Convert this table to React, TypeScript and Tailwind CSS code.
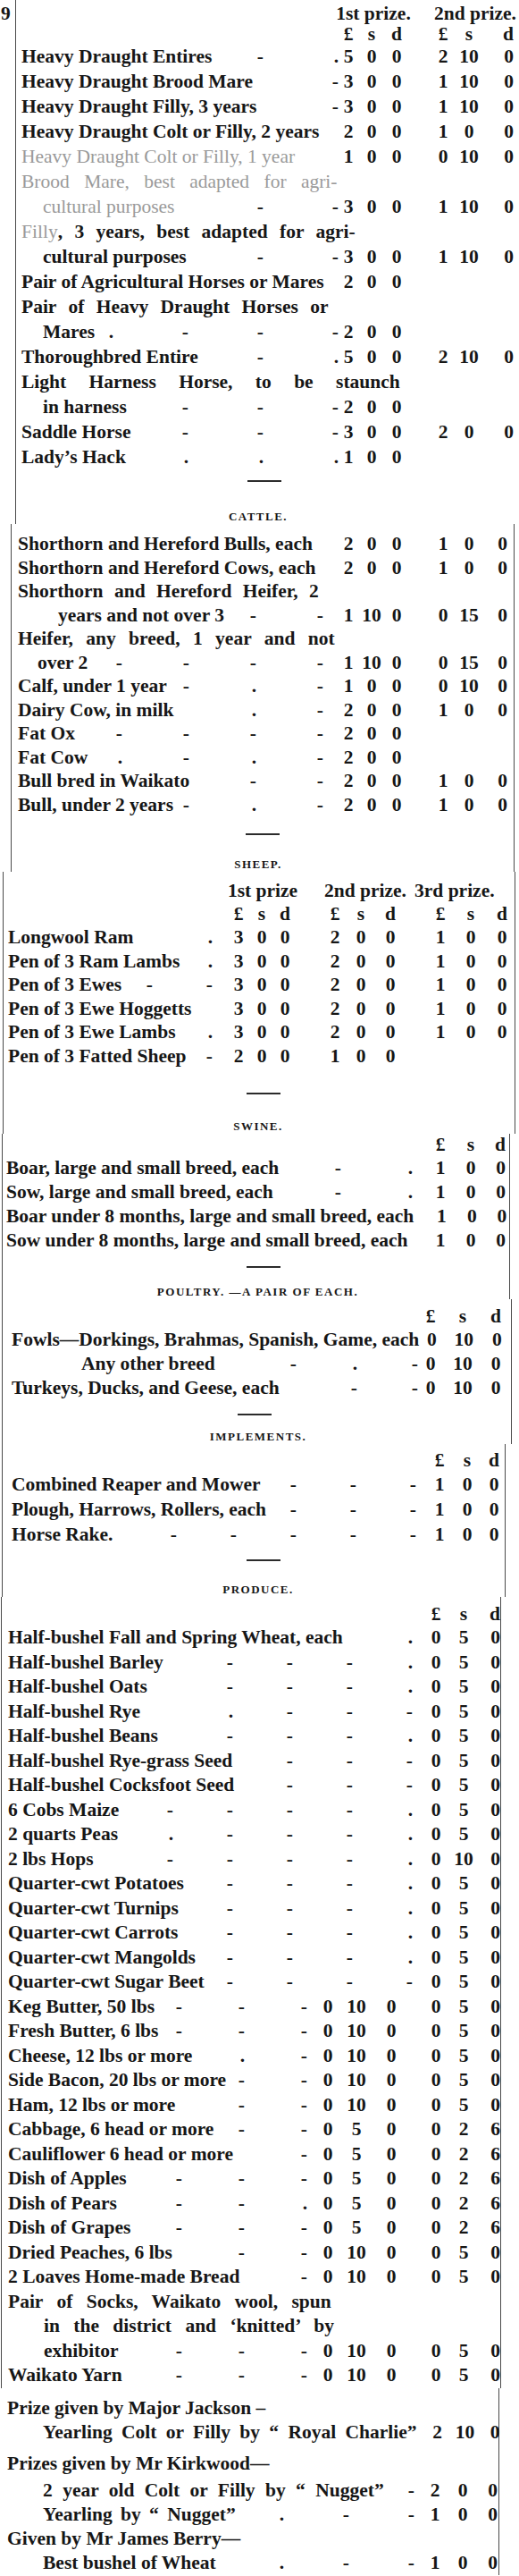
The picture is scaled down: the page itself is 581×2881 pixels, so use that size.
import { Fragment, type ReactNode } from "react";
import clsx from "clsx";

type Layout = {
  row: string;
  groups: string[][];
  spacers: string[];
  dashArea: string;
  slot: string;
};

type Row = {
  label?: ReactNode;
  indent?: string;
  dots?: string;
  v?: string;
  faded?: boolean;
  lay?: Layout;
};

const HORSE: Layout = {
  row: "h-[28px] leading-[28px]",
  groups: [
    ["w-[22px] text-center", "w-[30px] text-center", "w-[26px] text-center"],
    ["w-[26px] text-center", "w-[32px] text-center", "w-[40px] pr-[6px] text-right"],
  ],
  spacers: ["w-[26px]"],
  dashArea: "",
  slot: "w-[84px]",
};

const CATTLE: Layout = {
  row: "h-[26.5px] leading-[26.5px]",
  groups: [
    ["w-[22px] text-center", "w-[30px] text-center", "w-[26px] text-center"],
    ["w-[26px] text-center", "w-[32px] text-center", "w-[34px] pr-[7px] text-right"],
  ],
  spacers: ["w-[26px]"],
  dashArea: "pr-[17px]",
  slot: "w-[75px]",
};

const SHEEP: Layout = {
  row: "h-[26.5px] leading-[26.5px]",
  groups: [
    ["w-[26px] text-center", "w-[26px] text-center", "w-[26px] text-center"],
    ["w-[26px] text-center", "w-[32px] text-center", "w-[34px] text-center"],
    ["w-[26px] text-center", "w-[42px] text-center", "w-[28px] text-center"],
  ],
  spacers: ["w-[30px]", "w-[26px]"],
  dashArea: "pr-[16px]",
  slot: "w-[67px]",
};

const SWINE: Layout = {
  row: "h-[27px] leading-[27px]",
  groups: [["w-[26px] text-center", "w-[42px] text-center", "w-[22px] pr-[4px] text-right"]],
  spacers: [],
  dashArea: "pr-[18px]",
  slot: "w-[80px]",
};

const POULTRY: Layout = {
  row: "h-[27px] leading-[27px]",
  groups: [["w-[26px] text-center", "w-[46px] text-center", "w-[28px] text-center"]],
  spacers: [],
  dashArea: "pr-[1px]",
  slot: "w-[68px]",
};

const TOOLS: Layout = {
  row: "h-[28px] leading-[28px]",
  groups: [["w-[26px] text-center", "w-[36px] text-center", "w-[24px] text-center"]],
  spacers: [],
  dashArea: "pr-[13px]",
  slot: "w-[67px]",
};

const PRODUCE: Layout = {
  row: "h-[27.5px] leading-[27.5px]",
  groups: [["w-[26px] text-center", "w-[36px] text-center", "w-[23px] text-right"]],
  spacers: [],
  dashArea: "pr-[13px]",
  slot: "w-[67px]",
};

const PRODUCE2: Layout = {
  row: "h-[27.5px] leading-[27.5px]",
  groups: [
    ["w-[26px] text-center", "w-[38px] text-center", "w-[40px] text-center"],
    ["w-[26px] text-center", "w-[36px] text-center", "w-[23px] text-right"],
  ],
  spacers: ["w-[17px]"],
  dashArea: "pr-[10px]",
  slot: "w-[70px]",
};

const BOTTOM: Layout = {
  row: "h-[27px] leading-[27px]",
  groups: [["w-[26px] text-center", "w-[36px] text-center", "w-[22px] pr-[1px] text-right"]],
  spacers: [],
  dashArea: "pr-[10px]",
  slot: "w-[73px]",
};

const horses: Row[] = [
  { label: "Heavy Draught Entires", dots: "- .", v: "5 0 0 2 10 0" },
  { label: "Heavy Draught Brood Mare", dots: "-", v: "3 0 0 1 10 0" },
  { label: "Heavy Draught Filly, 3 years", dots: "-", v: "3 0 0 1 10 0" },
  { label: "Heavy Draught Colt or Filly, 2 years", v: "2 0 0 1 0 0" },
  { label: "Heavy Draught Colt or Filly, 1 year", faded: true, v: "1 0 0 0 10 0" },
  { label: "Brood Mare, best adapted for agri-", faded: true, indent: "[word-spacing:11px]" },
  { label: "cultural purposes", faded: true, indent: "pl-[24px]", dots: "- -", v: "3 0 0 1 10 0" },
  {
    label: (
      <>
        <span className="font-normal text-[#9a9a9a]">Filly</span>, 3 years, best adapted for agri-
      </>
    ),
    indent: "[word-spacing:8px]",
  },
  { label: "cultural purposes", indent: "pl-[24px]", dots: "- -", v: "3 0 0 1 10 0" },
  { label: "Pair of Agricultural Horses or Mares", v: "2 0 0" },
  { label: "Pair of Heavy Draught Horses or", indent: "[word-spacing:8px]" },
  { label: "Mares", indent: "pl-[24px]", dots: ". - - -", v: "2 0 0" },
  { label: "Thoroughbred Entire", dots: "- .", v: "5 0 0 2 10 0" },
  { label: "Light Harness Horse, to be staunch", indent: "[word-spacing:20px]" },
  { label: "in harness", indent: "pl-[24px]", dots: "- - -", v: "2 0 0" },
  { label: "Saddle Horse", dots: "- - -", v: "3 0 0 2 0 0" },
  { label: "Lady’s Hack", dots: ". . .", v: "1 0 0" },
];

const cattle: Row[] = [
  { label: "Shorthorn and Hereford Bulls, each", v: "2 0 0 1 0 0" },
  { label: "Shorthorn and Hereford Cows, each", v: "2 0 0 1 0 0" },
  { label: "Shorthorn and Hereford Heifer, 2", indent: "[word-spacing:7px]" },
  { label: "years and not over 3", indent: "pl-[45px]", dots: "- -", v: "1 10 0 0 15 0" },
  { label: "Heifer, any breed, 1 year and not", indent: "[word-spacing:9px]" },
  { label: "over 2", indent: "pl-[22px]", dots: "- - - -", v: "1 10 0 0 15 0" },
  { label: "Calf, under 1 year", dots: "- . -", v: "1 0 0 0 10 0" },
  { label: "Dairy Cow, in milk", dots: ". -", v: "2 0 0 1 0 0" },
  { label: "Fat Ox", dots: "- - - -", v: "2 0 0" },
  { label: "Fat Cow", dots: ". - . -", v: "2 0 0" },
  { label: "Bull bred in Waikato", dots: "- -", v: "2 0 0 1 0 0" },
  { label: "Bull, under 2 years", dots: "- . -", v: "2 0 0 1 0 0" },
];

const SHEEP_PRIZES = "3 0 0 2 0 0 1 0 0";
const sheep: Row[] = [
  { label: "Longwool Ram", dots: ".", v: SHEEP_PRIZES },
  { label: "Pen of 3 Ram Lambs", dots: ".", v: SHEEP_PRIZES },
  { label: "Pen of 3 Ewes", dots: "- -", v: SHEEP_PRIZES },
  { label: "Pen of 3 Ewe Hoggetts", v: SHEEP_PRIZES },
  { label: "Pen of 3 Ewe Lambs", dots: ".", v: SHEEP_PRIZES },
  { label: "Pen of 3 Fatted Sheep", dots: "-", v: "2 0 0 1 0 0" },
];

const swine: Row[] = [
  { label: "Boar, large and small breed, each", dots: "- .", v: "1 0 0" },
  { label: "Sow, large and small breed, each", dots: "- .", v: "1 0 0" },
  { label: "Boar under 8 months, large and small breed, each", v: "1 0 0" },
  { label: "Sow under 8 months, large and small breed, each", v: "1 0 0" },
];

const poultry: Row[] = [
  { label: "Fowls—Dorkings, Brahmas, Spanish, Game, each", v: "0 10 0" },
  { label: "Any other breed", indent: "pl-[78px]", dots: "- . -", v: "0 10 0" },
  { label: "Turkeys, Ducks, and Geese, each", dots: "- -", v: "0 10 0" },
];

const tools: Row[] = [
  { label: "Combined Reaper and Mower", dots: "- - -", v: "1 0 0" },
  { label: "Plough, Harrows, Rollers, each", dots: "- - -", v: "1 0 0" },
  { label: "Horse Rake.", dots: "- - - - -", v: "1 0 0" },
];

const produce: Row[] = [
  { label: "Half-bushel Fall and Spring Wheat, each", dots: ".", v: "0 5 0" },
  { label: "Half-bushel Barley", dots: "- - - .", v: "0 5 0" },
  { label: "Half-bushel Oats", dots: "- - - .", v: "0 5 0" },
  { label: "Half-bushel Rye", dots: ". - - -", v: "0 5 0" },
  { label: "Half-bushel Beans", dots: "- - - .", v: "0 5 0" },
  { label: "Half-bushel Rye-grass Seed", dots: "- - -", v: "0 5 0" },
  { label: "Half-bushel Cocksfoot Seed", dots: "- - -", v: "0 5 0" },
  { label: "6 Cobs Maize", dots: "- - - - .", v: "0 5 0" },
  { label: "2 quarts Peas", dots: ". - - - .", v: "0 5 0" },
  { label: "2 lbs Hops", dots: "- - - - .", v: "0 10 0" },
  { label: "Quarter-cwt Potatoes", dots: "- - - .", v: "0 5 0" },
  { label: "Quarter-cwt Turnips", dots: "- - - .", v: "0 5 0" },
  { label: "Quarter-cwt Carrots", dots: "- - - .", v: "0 5 0" },
  { label: "Quarter-cwt Mangolds", dots: "- - - .", v: "0 5 0" },
  { label: "Quarter-cwt Sugar Beet", dots: "- - - -", v: "0 5 0" },
  { label: "Keg Butter, 50 lbs", dots: "- - -", v: "0 10 0 0 5 0", lay: PRODUCE2 },
  { label: "Fresh Butter, 6 lbs", dots: "- - -", v: "0 10 0 0 5 0", lay: PRODUCE2 },
  { label: "Cheese, 12 lbs or more", dots: ". -", v: "0 10 0 0 5 0", lay: PRODUCE2 },
  { label: "Side Bacon, 20 lbs or more", dots: "- -", v: "0 10 0 0 5 0", lay: PRODUCE2 },
  { label: "Ham, 12 lbs or more", dots: "- -", v: "0 10 0 0 5 0", lay: PRODUCE2 },
  { label: "Cabbage, 6 head or more", dots: "- -", v: "0 5 0 0 2 6", lay: PRODUCE2 },
  { label: "Cauliflower 6 head or more", dots: "-", v: "0 5 0 0 2 6", lay: PRODUCE2 },
  { label: "Dish of Apples", dots: "- - -", v: "0 5 0 0 2 6", lay: PRODUCE2 },
  { label: "Dish of Pears", dots: "- - .", v: "0 5 0 0 2 6", lay: PRODUCE2 },
  { label: "Dish of Grapes", dots: "- - -", v: "0 5 0 0 2 6", lay: PRODUCE2 },
  { label: "Dried Peaches, 6 lbs", dots: "- -", v: "0 10 0 0 5 0", lay: PRODUCE2 },
  { label: "2 Loaves Home-made Bread", dots: "-", v: "0 10 0 0 5 0", lay: PRODUCE2 },
  { label: "Pair of Socks, Waikato wool, spun", indent: "[word-spacing:10px]" },
  { label: "in the district and ‘knitted’ by", indent: "pl-[40px] [word-spacing:10px]" },
  { label: "exhibitor", indent: "pl-[40px]", dots: "- - -", v: "0 10 0 0 5 0", lay: PRODUCE2 },
  { label: "Waikato Yarn", dots: "- - -", v: "0 10 0 0 5 0", lay: PRODUCE2 },
];

function Line({ r, lay }: { r: Row; lay: Layout }) {
  const L = r.lay ?? lay;

  // a label that runs on to the next line: no leaders and no money columns
  if (!r.v && !r.dots) {
    return (
      <div className={clsx("whitespace-nowrap", L.row, r.indent, r.faded && "font-normal text-[#9a9a9a]")}>
        {r.label}
      </div>
    );
  }

  const vals = r.v ? r.v.split(" ") : [];
  const dots = r.dots ? r.dots.split(" ") : [];
  return (
    <div className={clsx("flex whitespace-nowrap", L.row)}>
      <span className={clsx("shrink-0", r.indent, r.faded && "font-normal text-[#9a9a9a]")}>
        {r.label}
      </span>
      <span className={clsx("flex min-w-0 flex-1 justify-end overflow-hidden", L.dashArea)}>
        {dots.map((d, i) => (
          <span key={i} className={clsx("shrink-0 text-right", L.slot)}>
            {d}
          </span>
        ))}
      </span>
      {L.groups.map((g, gi) => (
        <Fragment key={gi}>
          {gi > 0 && <span className={clsx("shrink-0", L.spacers[gi - 1])} />}
          {g.map((c, ci) => (
            <span key={ci} className={clsx("shrink-0", c)}>
              {vals[gi * 3 + ci] ?? ""}
            </span>
          ))}
        </Fragment>
      ))}
    </div>
  );
}

function Break({ title, rule, head }: { title: string; rule: string; head: string }) {
  return (
    <>
      <div className={clsx("h-[2px] w-[38px] bg-[#2b2b2b]", rule)} />
      <div className={clsx("text-center text-[13px] leading-[16px] tracking-[1.5px]", head)}>
        {title}
      </div>
    </>
  );
}

const LSD = (lay: Layout, row: string, v: string): Row => ({ v, lay: { ...lay, row } });

export default function App() {
  return (
    <div className="w-[581px] overflow-hidden bg-white font-['Liberation_Serif','Times_New_Roman',serif] text-[21.5px] font-bold text-[#161616]">
      {/* HORSES */}
      <div className="flex">
        <div className="w-[17px] shrink-0 pl-[1px] pt-[3px] leading-[24px]">9</div>
        <div className="w-[564px] border-l border-[#4a4a4a] pl-[6px] pt-[3px]">
          <div className="flex h-[24px] whitespace-nowrap leading-[24px]">
            <span className="flex-1" />
            <span className="w-[86px] text-center">1st prize.</span>
            <span className="w-[22px]" />
            <span className="w-[98px] text-center">2nd prize.</span>
          </div>
          <Line r={LSD(HORSE, "h-[22px] leading-[22px]", "£ s d £ s d")} lay={HORSE} />
          {horses.map((r, i) => (
            <Line key={i} r={r} lay={HORSE} />
          ))}
          <Break title="CATTLE." rule="mt-[12px] ml-[253px]" head="mt-[31px] pr-[27px]" />
        </div>
      </div>

      {/* CATTLE */}
      <div className="ml-[12px] w-[564px] border-x border-[#4a4a4a] pl-[7px] pt-[9px]">
        {cattle.map((r, i) => (
          <Line key={i} r={r} lay={CATTLE} />
        ))}
        <Break title="SHEEP." rule="mt-[19px] ml-[255px]" head="mt-[25px] pr-[17px]" />
      </div>

      {/* SHEEP */}
      <div className="ml-[3px] w-[574px] border-x border-[#4a4a4a] pl-[5px] pt-[8px]">
        <div className="flex h-[26px] whitespace-nowrap leading-[26px]">
          <span className="flex-1" />
          <span className="w-[80px] text-center">1st prize</span>
          <span className="w-[28px]" />
          <span className="w-[94px] text-center">2nd prize.</span>
          <span className="w-[8px]" />
          <span className="w-[112px] text-left">3rd prize.</span>
        </div>
        <Line r={LSD(SHEEP, "h-[26px] leading-[26px]", "£ s d £ s d £ s d")} lay={SHEEP} />
        {sheep.map((r, i) => (
          <Line key={i} r={r} lay={SHEEP} />
        ))}
        <Break title="SWINE." rule="mt-[28px] ml-[267px]" head="mt-[28px] pr-[7px]" />
      </div>

      {/* SWINE */}
      <div className="ml-[2px] w-[569px] border-x border-[#4a4a4a] pl-[4px]">
        <Line r={LSD(SWINE, "h-[25px] leading-[25px]", "£ s d")} lay={SWINE} />
        {swine.map((r, i) => (
          <Line key={i} r={r} lay={SWINE} />
        ))}
        <Break title="POULTRY. —A PAIR OF EACH." rule="mt-[15px] ml-[269px]" head="mt-[19px]" />
      </div>

      {/* POULTRY */}
      <div className="ml-[2px] w-[571px] border-x border-[#4a4a4a] pl-[10px] pr-[3px] pt-[7px]">
        <Line r={LSD(POULTRY, "h-[25px] leading-[25px]", "£ s d")} lay={POULTRY} />
        {poultry.map((r, i) => (
          <Line key={i} r={r} lay={POULTRY} />
        ))}
        <Break title="IMPLEMENTS." rule="mt-[15px] ml-[253px]" head="mt-[16px] pr-[4px]" />
      </div>

      {/* IMPLEMENTS */}
      <div className="ml-[2px] w-[564px] border-x border-[#4a4a4a] pl-[10px] pt-[6px]">
        <Line r={LSD(TOOLS, "h-[25px] leading-[25px]", "£ s d")} lay={TOOLS} />
        {tools.map((r, i) => (
          <Line key={i} r={r} lay={TOOLS} />
        ))}
        <Break title="PRODUCE." rule="mt-[14px] ml-[263px]" head="mt-[24px]" />
      </div>

      {/* PRODUCE */}
      <div className="ml-[1px] w-[560px] border-x border-[#4a4a4a] pl-[7px] pt-[7px]">
        <Line r={LSD(PRODUCE, "h-[25px] leading-[25px]", "£ s d")} lay={PRODUCE} />
        {produce.map((r, i) => (
          <Line key={i} r={r} lay={PRODUCE} />
        ))}
      </div>

      {/* SPECIAL PRIZES */}
      <div className="w-[559px] border-r border-[#4a4a4a] pl-[8px] pt-[9px]">
        <Line r={{ label: "Prize given by Major Jackson –" }} lay={BOTTOM} />
        <Line
          r={{ label: "Yearling Colt or Filly by “ Royal Charlie”", indent: "pl-[40px] [word-spacing:5px]", v: "2 10 0" }}
          lay={BOTTOM}
        />
        <div className="mt-[8px]">
          <Line r={{ label: "Prizes given by Mr Kirkwood—" }} lay={BOTTOM} />
        </div>
        <div className="mt-[3px]">
          <Line
            r={{ label: "2 year old Colt or Filly by “ Nugget”", indent: "pl-[40px] [word-spacing:6px]", dots: "-", v: "2 0 0" }}
            lay={BOTTOM}
          />
        </div>
        <Line r={{ label: "Yearling by “ Nugget”", indent: "pl-[40px] [word-spacing:4px]", dots: ". - -", v: "1 0 0" }} lay={BOTTOM} />
        <Line r={{ label: "Given by Mr James Berry—" }} lay={BOTTOM} />
        <Line r={{ label: "Best bushel of Wheat", indent: "pl-[40px]", dots: ". - -", v: "1 0 0" }} lay={BOTTOM} />
      </div>
    </div>
  );
}
